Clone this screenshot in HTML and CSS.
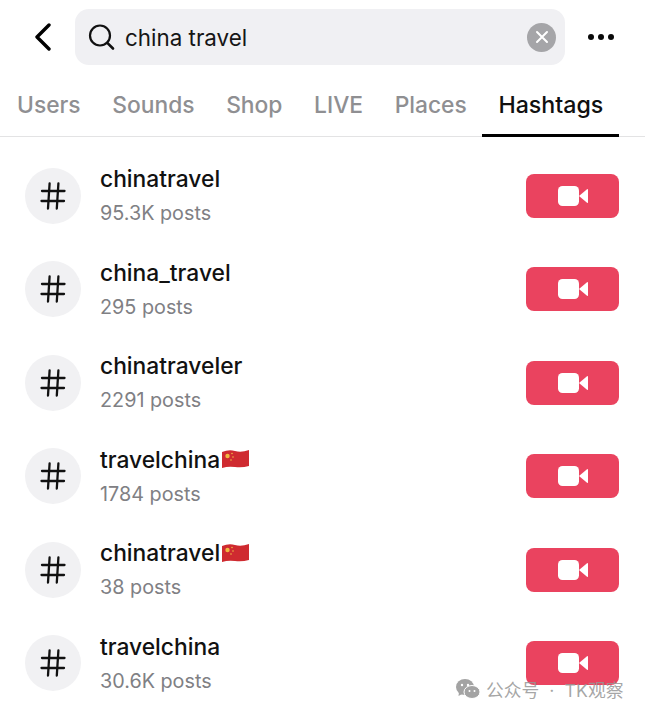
FILE: index.html
```html
<!DOCTYPE html>
<html>

<head>
    <title>china travel - Hashtags</title>
    <link rel="stylesheet" href="styles.css">
</head>

<body>
    <!-- Search header -->
    <div class="top-bar">
        <svg class="back-icon" width="20" height="28" viewBox="0 0 20 28">
            <path d="M16 2 L4 14 L16 26" fill="none" stroke="#000" stroke-width="3.4" stroke-linecap="round" stroke-linejoin="round" />
        </svg>
        <div class="search-box">
            <svg class="search-icon" width="28" height="28" viewBox="0 0 28 28">
                <circle cx="12" cy="12.5" r="10" fill="none" stroke="#111" stroke-width="2.2" />
                <path d="M19.3 19.8 L25 25.5" fill="none" stroke="#111" stroke-width="2.6" stroke-linecap="round" />
            </svg>
            <span class="search-text">china travel</span>
            <span class="clear-btn">
                <svg width="14" height="14" viewBox="0 0 14 14">
                    <path d="M2 2 L12 12 M12 2 L2 12" stroke="#fff" stroke-width="2" stroke-linecap="round" />
                </svg>
            </span>
        </div>
        <div class="more-btn"><i></i><i></i><i></i></div>
    </div>

    <!-- Tabs -->
    <div class="tabs">
        <span class="tab">Users</span>
        <span class="tab">Sounds</span>
        <span class="tab">Shop</span>
        <span class="tab">LIVE</span>
        <span class="tab">Places</span>
        <span class="tab active">Hashtags</span>
    </div>

    <!-- Hashtag rows -->
    <div class="list">
        <div class="row">
            <div class="hash"><svg width="26" height="28" viewBox="0 0 26 28"><path d="M9.6 1.5 L8 26.5 M18.4 1.5 L16.8 26.5 M2 9 H24.5 M1.5 19 H24" fill="none" stroke="#111" stroke-width="2.3" stroke-linecap="round" /></svg></div>
            <div class="info">
                <div class="name">chinatravel</div>
                <div class="count">95.3K posts</div>
            </div>
            <div class="record"><svg width="30" height="20" viewBox="0 0 30 20"><rect x="0" y="0" width="21" height="20" rx="4.5" fill="#fff" /><path d="M21 10 L29 3.2 Q30 2.6 30 3.8 V16.2 Q30 17.4 29 16.8 Z" fill="#fff" /></svg></div>
        </div>
        <div class="row">
            <div class="hash"><svg width="26" height="28" viewBox="0 0 26 28"><path d="M9.6 1.5 L8 26.5 M18.4 1.5 L16.8 26.5 M2 9 H24.5 M1.5 19 H24" fill="none" stroke="#111" stroke-width="2.3" stroke-linecap="round" /></svg></div>
            <div class="info">
                <div class="name">china_travel</div>
                <div class="count">295 posts</div>
            </div>
            <div class="record"><svg width="30" height="20" viewBox="0 0 30 20"><rect x="0" y="0" width="21" height="20" rx="4.5" fill="#fff" /><path d="M21 10 L29 3.2 Q30 2.6 30 3.8 V16.2 Q30 17.4 29 16.8 Z" fill="#fff" /></svg></div>
        </div>
        <div class="row">
            <div class="hash"><svg width="26" height="28" viewBox="0 0 26 28"><path d="M9.6 1.5 L8 26.5 M18.4 1.5 L16.8 26.5 M2 9 H24.5 M1.5 19 H24" fill="none" stroke="#111" stroke-width="2.3" stroke-linecap="round" /></svg></div>
            <div class="info">
                <div class="name">chinatraveler</div>
                <div class="count">2291 posts</div>
            </div>
            <div class="record"><svg width="30" height="20" viewBox="0 0 30 20"><rect x="0" y="0" width="21" height="20" rx="4.5" fill="#fff" /><path d="M21 10 L29 3.2 Q30 2.6 30 3.8 V16.2 Q30 17.4 29 16.8 Z" fill="#fff" /></svg></div>
        </div>
        <div class="row">
            <div class="hash"><svg width="26" height="28" viewBox="0 0 26 28"><path d="M9.6 1.5 L8 26.5 M18.4 1.5 L16.8 26.5 M2 9 H24.5 M1.5 19 H24" fill="none" stroke="#111" stroke-width="2.3" stroke-linecap="round" /></svg></div>
            <div class="info">
                <div class="name">travelchina<svg class="flag" width="27" height="20" viewBox="0 0 27 20"><path d="M0 3 Q7 0 13 2 T27 1 V17 Q20 19 13 18 T0 19 Z" fill="#cf2a30" /><circle cx="5.5" cy="7" r="2.2" fill="#f0b840" /><circle cx="10" cy="4.5" r="0.8" fill="#f0b840" /><circle cx="11" cy="8" r="0.8" fill="#f0b840" /><circle cx="9" cy="11" r="0.8" fill="#f0b840" /></svg></div>
                <div class="count">1784 posts</div>
            </div>
            <div class="record"><svg width="30" height="20" viewBox="0 0 30 20"><rect x="0" y="0" width="21" height="20" rx="4.5" fill="#fff" /><path d="M21 10 L29 3.2 Q30 2.6 30 3.8 V16.2 Q30 17.4 29 16.8 Z" fill="#fff" /></svg></div>
        </div>
        <div class="row">
            <div class="hash"><svg width="26" height="28" viewBox="0 0 26 28"><path d="M9.6 1.5 L8 26.5 M18.4 1.5 L16.8 26.5 M2 9 H24.5 M1.5 19 H24" fill="none" stroke="#111" stroke-width="2.3" stroke-linecap="round" /></svg></div>
            <div class="info">
                <div class="name">chinatravel<svg class="flag" width="27" height="20" viewBox="0 0 27 20"><path d="M0 3 Q7 0 13 2 T27 1 V17 Q20 19 13 18 T0 19 Z" fill="#cf2a30" /><circle cx="5.5" cy="7" r="2.2" fill="#f0b840" /><circle cx="10" cy="4.5" r="0.8" fill="#f0b840" /><circle cx="11" cy="8" r="0.8" fill="#f0b840" /><circle cx="9" cy="11" r="0.8" fill="#f0b840" /></svg></div>
                <div class="count">38 posts</div>
            </div>
            <div class="record"><svg width="30" height="20" viewBox="0 0 30 20"><rect x="0" y="0" width="21" height="20" rx="4.5" fill="#fff" /><path d="M21 10 L29 3.2 Q30 2.6 30 3.8 V16.2 Q30 17.4 29 16.8 Z" fill="#fff" /></svg></div>
        </div>
        <div class="row">
            <div class="hash"><svg width="26" height="28" viewBox="0 0 26 28"><path d="M9.6 1.5 L8 26.5 M18.4 1.5 L16.8 26.5 M2 9 H24.5 M1.5 19 H24" fill="none" stroke="#111" stroke-width="2.3" stroke-linecap="round" /></svg></div>
            <div class="info">
                <div class="name">travelchina</div>
                <div class="count">30.6K posts</div>
            </div>
            <div class="record"><svg width="30" height="20" viewBox="0 0 30 20"><rect x="0" y="0" width="21" height="20" rx="4.5" fill="#fff" /><path d="M21 10 L29 3.2 Q30 2.6 30 3.8 V16.2 Q30 17.4 29 16.8 Z" fill="#fff" /></svg></div>
        </div>
    </div>

    <!-- Watermark over the last row -->
    <div class="watermark">
        <svg width="24" height="20" viewBox="0 0 24 20">
            <ellipse cx="9" cy="8" rx="9" ry="8" fill="#a3a3a3" />
            <path d="M3 13 L2.5 17 L7 14.5 Z" fill="#a3a3a3" />
            <ellipse cx="16" cy="13" rx="8" ry="6.5" stroke="#fff" stroke-width="1" fill="#a3a3a3" />
            <circle cx="6" cy="6" r="1.2" fill="#fff" />
            <circle cx="12" cy="6" r="1.2" fill="#fff" />
            <circle cx="13.5" cy="12" r="1" fill="#fff" />
            <circle cx="18.5" cy="12" r="1" fill="#fff" />
        </svg>
        <span>公众号 · TK观察</span>
    </div>
</body>

</html>
```

FILE: styles.css
```css
body {
    margin: 0;
    padding: 0;
    width: 645px;
    height: 712px;
    overflow: hidden;
    position: relative;
    background-color: #fff;
    font-family: Inter, "Noto Sans CJK SC", sans-serif;
}

.top-bar {
    display: flex;
    align-items: center;
    height: 56px;
    padding-top: 9px;
}

.back-icon {
    margin-left: 33px;
    margin-right: 22px;
}

.search-box {
    display: flex;
    align-items: center;
    width: 490px;
    height: 56px;
    box-sizing: border-box;
    padding-left: 13px;
    padding-right: 9px;
    background-color: #f0f0f3;
    border-radius: 14px;
}

.search-icon {
    margin-right: 9px;
}

.search-text {
    flex: 1;
    font-size: 22.4px;
    color: #161616;
}

.clear-btn {
    display: flex;
    align-items: center;
    justify-content: center;
    width: 29px;
    height: 29px;
    background-color: #a5a5a8;
    border-radius: 50%;
}

.more-btn {
    display: flex;
    gap: 4px;
    margin-left: 23px;
}

.more-btn i {
    width: 6px;
    height: 6px;
    background-color: #0a0a0a;
    border-radius: 50%;
}

.tabs {
    display: flex;
    gap: 31.6px;
    height: 57px;
    margin-top: 14px;
    padding-left: 17px;
    border-bottom: 1px solid #e3e3e4;
}

.tab {
    position: relative;
    height: 57px;
    line-height: 52px;
    font-size: 22.8px;
    font-weight: 500;
    color: #8f8f92;
}

.tab.active {
    font-size: 23.2px;
    color: #101010;
}

.tab.active::after {
    content: "";
    position: absolute;
    left: -16px;
    right: -16px;
    bottom: -1px;
    height: 3px;
    background-color: #000;
}

.list {
    padding-top: 12px;
}

.row {
    display: flex;
    align-items: center;
    height: 93.5px;
    padding-left: 25px;
    padding-right: 26px;
}

.hash {
    display: flex;
    align-items: center;
    justify-content: center;
    width: 56px;
    height: 56px;
    background-color: #f1f1f3;
    border-radius: 50%;
}

.info {
    flex: 1;
    margin-left: 19px;
}

.name {
    display: flex;
    align-items: center;
    height: 33px;
    margin-top: -4px;
    font-size: 22.8px;
    font-weight: 500;
    color: #111;
}

.flag {
    margin-left: 2px;
}

.count {
    margin-top: 6px;
    font-size: 19.8px;
    color: #808084;
}

.record {
    display: flex;
    align-items: center;
    justify-content: center;
    width: 93px;
    height: 44px;
    background-color: #ea435f;
    border-radius: 8px;
}

.watermark {
    position: absolute;
    left: 456px;
    top: 676px;
    display: flex;
    align-items: center;
    gap: 6px;
    font-size: 17.8px;
    word-spacing: 5px;
    color: rgba(150, 150, 150, 0.85);
}
```
